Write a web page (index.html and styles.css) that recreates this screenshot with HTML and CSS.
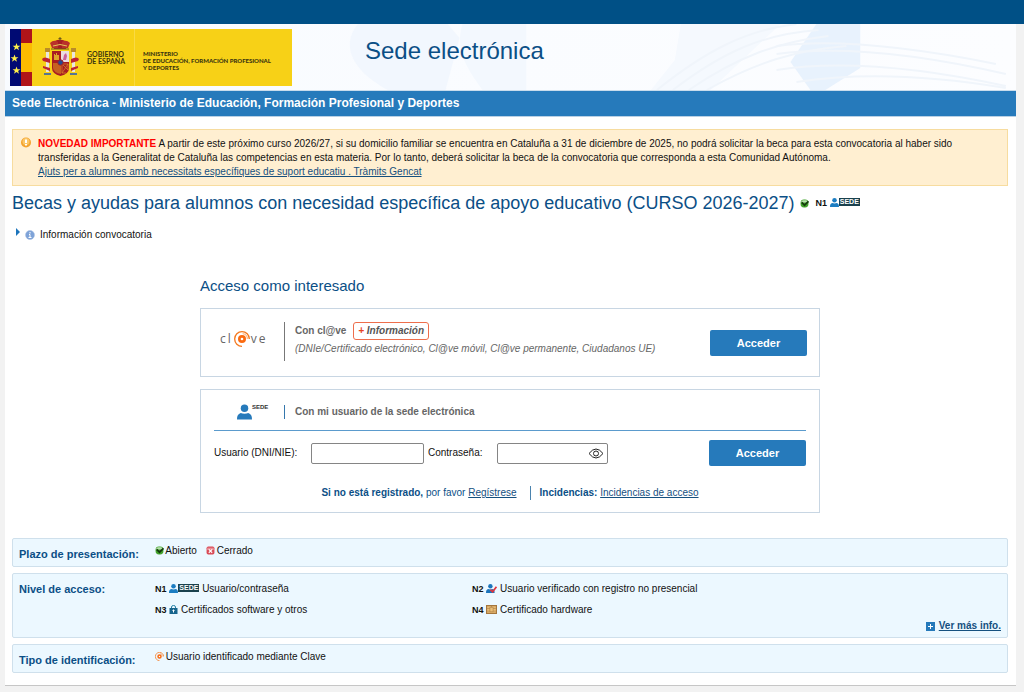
FILE: index.html
```html
<!DOCTYPE html>
<html lang="es">
<head>
  <meta charset="UTF-8">
  <meta name="viewport" content="width=device-width, initial-scale=1.0">
  <title>Sede electrónica</title>
  <link rel="stylesheet" href="styles.css">
</head>
<body>
  <svg class="sprite" aria-hidden="true">
    <symbol id="i-user" viewBox="0 0 16 16">
      <circle cx="8" cy="4" r="4"/>
      <path d="M0 16c0-4 1-6 4-7 2 1 6 1 8 0 3 1 4 3 4 7z"/>
    </symbol>
    <symbol id="i-open" viewBox="0 0 16 16">
      <rect x="1" y="1" width="14" height="14" rx="6" fill="#43a32c"/>
      <path d="M2 6c0-3 2-4 6-4s6 1 6 4z" fill="#b9dfae"/>
      <path d="M3 6l5 5 7-7" fill="none" stroke="#123c0b" stroke-width="3"/>
    </symbol>
    <symbol id="i-closed" viewBox="0 0 16 16">
      <rect x="1" y="1" width="14" height="14" rx="3" fill="#d94b57"/>
      <path d="M2 3h12v4H2z" fill="#ea8c93"/>
      <path d="M5 6l6 6m0-6l-6 6" stroke="#fff" stroke-width="2"/>
    </symbol>
    <symbol id="i-at" viewBox="0 0 24 24">
      <g fill="none" stroke="#f47a20" stroke-width="2">
        <path d="M12 23A11 11 0 1 1 23 12"/>
        <path d="M13 4A8 8 0 0 1 20 12" stroke-width="1"/>
      </g>
      <circle cx="12" cy="12" r="4" fill="#fff" stroke="#fb6a10" stroke-width="4"/>
    </symbol>
  </svg>

  <div class="topbar"></div>
  <div class="page">
    <header class="header">
      <svg class="header-bg" viewBox="0 0 720 66" preserveAspectRatio="none" aria-hidden="true">
        <path d="M60 0h90l12 14-14 52H90C60 50 40 25 60 0z" fill="#f2f7fe"/>
        <path d="M165 0h64v66h-44c-16-22-28-40-20-66z" fill="#f3f8fe"/>
        <path d="M384 0h100l-70 66h-60l24-30z" fill="#f5f9fe"/>
        <path d="M520 0h44v44l-35 22h-15l-20-28z" fill="#e8f2fd"/>
        <g fill="none" stroke="#f0f5fb" stroke-width="2">
          <path d="M360 66c50-40 90-60 140-66M376 66c50-38 90-56 146-60M392 66c50-34 90-48 140-54M410 66c50-28 90-40 140-44"/>
          <path d="M480 22q80-10 220 18M480 30q90-12 230 20M480 46q90-14 230 16M500 58q90-14 210 6"/>
        </g>
      </svg>
      <a class="logo" href="#">
        <svg class="logo-flag" viewBox="0 0 72 57" role="img" aria-label="Escudo de España">
          <path d="M0 0h11v57H0z" fill="#000a73"/>
          <path d="M11 0h11v57H11z" fill="#b01419"/>
          <path d="M11 14h11v29H11z" fill="#fdbb00"/>
          <g fill="#fff04a">
            <path id="star" d="M6.500 14l1 2.700h2.900l-2.300 1.700.9 2.800-2.500-1.700L4 21.200l.9-2.800-2.300-1.700h2.900z"/>
            <use href="#star" x="-2" y="11.500"/>
            <use href="#star" y="23.500"/>
          </g>
          <path d="M43 13q7-5 14 0l-1 7H44z" fill="#a71c24"/>
          <path d="M40 14q4-4 8-1v6h-6zM60 14q-4-4-8-1v6h6z" fill="#b9312a"/>
          <path d="M50 8v4m-1.500-2.500h3M41 20h18" stroke="#6b5b19" stroke-width="1"/>
          <path d="M43 17q7-3 14 0" fill="none" stroke="#e4c85a" stroke-width="1"/>
          <path d="M42 22h17v17q0 6-8.500 8Q42 45 42 39z" fill="#a91c22"/>
          <path d="M51 22h8v11h-8z" fill="#eadce3"/>
          <path d="M53 31l1-5 2-2 1 3-1 4z" fill="#c95f9b"/>
          <path d="M44 31v-6h1v1h1v-2h1v2h2v5z" fill="#dfa52b"/>
          <path d="M43 34h8v11q-7-1-8-6z" fill="#d9a017"/>
          <path d="M44 34v8m2-8v10m2-10v11m2-11v11" stroke="#b3232a" stroke-width="1"/>
          <path d="M52 35h6l-6 9zM58 35v6l-6-6m0 9h4" fill="none" stroke="#d58c25" stroke-width=".7"/>
          <circle cx="50.500" cy="33.500" r="2.700" fill="#234b91" stroke="#a91c22"/>
          <path d="M36 23h3v20h-3zM62 23h3v20h-3z" fill="#eae6dc"/>
          <path d="M35 22h5m-5-2h5m21 2h5m-5-2h5" stroke="#a6752f" stroke-width="1.500"/>
          <path d="M32 30q2-3 8 0v4l-7-2zM69 30q-2-3-8 0v4l7-2zM33 37l7 2v3l-7-3zM68 37l-7 2v3l7-3z" fill="#bd2330"/>
          <path d="M34 44h7v2h-7zM60 44h7v2h-7z" fill="#577592"/>
        </svg>
        <span class="logo-gob">GOBIERNO<br>DE ESPAÑA</span>
        <span class="logo-min">MINISTERIO<br>DE EDUCACIÓN, FORMACIÓN PROFESIONAL<br>Y DEPORTES</span>
      </a>
      <h1>Sede electrónica</h1>
    </header>

    <div class="bluebar">Sede Electrónica - Ministerio de Educación, Formación Profesional y Deportes</div>

    <main class="content">
      <div class="notice">
        <svg class="notice-icon" viewBox="0 0 24 24" aria-hidden="true">
          <circle cx="12" cy="11" r="10" fill="#f3a32d"/>
          <circle cx="12" cy="9" r="7" fill="#fbc667"/>
          <path d="M12 5v7m0 2v3" stroke="#fff" stroke-width="4"/>
        </svg>
        <div>
          <strong>NOVEDAD IMPORTANTE</strong> A partir de este próximo curso 2026/27, si su domicilio familiar se encuentra en Cataluña a 31 de diciembre de 2025, no podrá solicitar la beca para esta convocatoria al haber sido transferidas a la Generalitat de Cataluña las competencias en esta materia. Por lo tanto, deberá solicitar la beca de la convocatoria que corresponda a esta Comunidad Autónoma.<br>
          <a href="#">Ajuts per a alumnes amb necessitats específiques de suport educatiu . Tràmits Gencat</a>
        </div>
      </div>

      <div class="title-row">
        <h2>Becas y ayudas para alumnos con necesidad específica de apoyo educativo (CURSO 2026-2027)</h2>
        <svg class="icon" aria-label="Abierto"><use href="#i-open"/></svg>
        <span class="level"><b>N1</b> <svg class="icon user"><use href="#i-user"/></svg><span class="sede">SEDE</span></span>
      </div>

      <details class="info">
        <summary>
          <svg class="arrow" viewBox="0 0 4 8" aria-hidden="true"><path d="M0 0l4 4-4 4z" fill="#1c75bc"/></svg>
          <svg class="info-icon" viewBox="0 0 20 20" aria-hidden="true">
            <circle cx="10" cy="10" r="9" fill="#7ea3d8" stroke="#a6bfe3"/>
            <path d="M10 4v3M8 9h2v6m-3 0h6" fill="none" stroke="#fff" stroke-width="2"/>
          </svg>
          Información convocatoria
        </summary>
      </details>

      <section class="access">
        <h3>Acceso como interesado</h3>

        <div class="box clave">
          <div class="clave-logo">
            <span>cl</span><svg viewBox="0 0 24 24" aria-label="@"><use href="#i-at"/></svg><span>ve</span>
          </div>
          <div class="clave-text">
            <div class="clave-title">Con cl@ve <a class="more" href="#"><span>+</span> Información</a></div>
            <em>(DNIe/Certificado electrónico, Cl@ve móvil, Cl@ve permanente, Ciudadanos UE)</em>
          </div>
          <button class="btn" type="button">Acceder</button>
        </div>

        <form class="box login">
          <div class="login-head">
            <div class="login-logo"><svg><use href="#i-user"/></svg><span>SEDE</span></div>
            <b>Con mi usuario de la sede electrónica</b>
          </div>
          <div class="login-row">
            <label class="label-user" for="usuario">Usuario (DNI/NIE):</label>
            <input type="text" id="usuario">
            <label class="label-pass" for="clave">Contraseña:</label>
            <span class="pass">
              <input type="password" id="clave">
              <button class="eye" type="button" aria-label="Mostrar contraseña">
                <svg viewBox="0 0 16 12" fill="none" stroke="#222">
                  <path d="M1 6q7-9 14 0-7 9-14 0z"/>
                  <circle cx="8" cy="6" r="2.500"/>
                </svg>
              </button>
            </span>
            <button class="btn" type="submit">Acceder</button>
          </div>
          <div class="login-links">
            <span><b>Si no está registrado,</b> por favor <a href="#">Regístrese</a></span>
            <span><b>Incidencias:</b> <a href="#">Incidencias de acceso</a></span>
          </div>
        </form>
      </section>

      <section class="panel">
        <h4>Plazo de presentación:</h4>
        <div class="states">
          <span class="level"><svg class="icon"><use href="#i-open"/></svg> Abierto</span>
          <span class="level"><svg class="icon"><use href="#i-closed"/></svg> Cerrado</span>
        </div>
      </section>

      <section class="panel panel-levels">
        <h4>Nivel de acceso:</h4>
        <div class="levels">
          <span class="level"><b>N1</b> <svg class="icon user"><use href="#i-user"/></svg><span class="sede">SEDE</span> Usuario/contraseña</span>
          <span class="level"><b>N2</b>
            <svg class="icon wide" viewBox="0 0 20 16"><use href="#i-user" width="16" height="16" fill="#1c75bc"/><path d="M8 10l4 4 7-9" fill="none" stroke="#e0343c" stroke-width="3"/></svg>
            Usuario verificado con registro no presencial</span>
          <span class="level"><b>N3</b>
            <svg class="icon" viewBox="0 0 16 18"><path d="M4 8V4q0-3 4-3t4 3v4" fill="none" stroke="#2581a6" stroke-width="2"/><path d="M0 6h16v12H0z" fill="#17658d"/><path d="M8 9v6m-2-4h4" stroke="#fff" stroke-width="2"/></svg>
            Certificados software y otros</span>
          <span class="level"><b>N4</b>
            <svg class="icon wide" viewBox="0 0 20 16"><path d="M1 1h18v14H1z" fill="#ecbf78" stroke="#a4763d" stroke-width="2"/><path d="M2 6h5m-5 5h5m6-5h5m-5 5h5M7 4v8h6V4zM10 1v3" fill="none" stroke="#a4763d"/></svg>
            Certificado hardware</span>
        </div>
        <a class="see-more" href="#">
          <svg viewBox="0 0 18 18" aria-hidden="true"><path d="M0 0h18v18H0z" fill="#2579ba"/><path d="M9 4v10M4 9h10" stroke="#fff" stroke-width="2"/></svg><span>Ver más info.</span></a>
      </section>

      <section class="panel">
        <h4>Tipo de identificación:</h4>
        <div class="states">
          <span class="level"><svg class="icon"><use href="#i-at"/></svg> Usuario identificado mediante Clave</span>
        </div>
      </section>
    </main>
  </div>
</body>
</html>
```

FILE: styles.css
```css
* {
  box-sizing: border-box;
}
body {
  margin: 0;
  background-color: #f2f2f2;
  font-family: "Liberation Sans", Arial, sans-serif;
  font-size: 10px;
  line-height: 14px;
  color: #111;
}
h1, h2, h3, h4 {
  margin: 0;
  color: #0b4f86;
  font-weight: normal;
}
a {
  color: #15507f;
}
button, input {
  font-family: inherit;
}
.sprite {
  display: none;
}
.topbar {
  height: 24px;
  background-color: #005086;
}
.page {
  margin: 0 8px 0 5px;
  background-color: #fff;
  border-bottom: 1px solid #c6c6c6;
}

/* header */
.header {
  position: relative;
  display: flex;
  align-items: flex-start;
  height: 67px;
  padding: 5px;
  background: linear-gradient(to right, #f8fbff, #fcfdff);
  border-bottom: 1px solid #c9dcec;
}
.header-bg {
  position: absolute;
  top: 0;
  right: 0;
  width: 71%;
  height: 66px;
}
.logo {
  position: relative;
  display: flex;
  align-items: center;
  width: 282px;
  height: 57px;
  background-color: #f7d117;
  color: #3b3510;
  font-family: Lato, sans-serif;
  font-size: 7px;
  line-height: 7px;
  font-weight: bold;
  text-decoration: none;
  white-space: nowrap;
}
.logo-flag {
  width: 72px;
  height: 57px;
}
.logo-gob {
  width: 52px;
  padding-left: 5px;
}
.logo-min {
  display: flex;
  align-items: center;
  height: 57px;
  padding: 6px 0 0 8px;
  border-left: 1px solid #f9da45;
  font-size: 6px;
  font-weight: 900;
}
.header h1 {
  position: relative;
  margin-left: 73px;
  padding-top: 7px;
  font-size: 24px;
  line-height: 30px;
}
.bluebar {
  padding: 0 7px;
  background-color: #267abb;
  border-bottom: 1px solid #b9d0e4;
  color: #fff;
  font-size: 12px;
  line-height: 25px;
  font-weight: bold;
}
.content {
  padding: 12px 8px 12px 7px;
}

/* notice */
.notice {
  display: flex;
  gap: 6px;
  padding: 7px 7px 6px;
  background-color: #ffefd1;
  border: 1px solid #f7dc9f;
}
.notice strong {
  color: #f00;
}
.notice-icon {
  flex: none;
  width: 12px;
  height: 12px;
}

.title-row {
  display: flex;
  align-items: center;
  gap: 6px;
  margin-top: 4px;
}
.title-row h2 {
  font-size: 18px;
  line-height: 26px;
}
.icon {
  width: 9px;
  height: 9px;
  vertical-align: -1px;
}
.icon.wide {
  width: 11px;
}
.icon.user {
  fill: #1c7dc2;
}
.states .icon {
  margin-right: -1px;
}
.level b {
  font-size: 9px;
}
.sede {
  display: inline-block;
  padding: 0 1px;
  background-color: #1a414d;
  color: #fff;
  font-size: 7px;
  line-height: 8px;
  font-weight: bold;
  vertical-align: 2px;
}
.info {
  margin-top: 12px;
}
.info summary {
  display: flex;
  align-items: center;
  gap: 5px;
  padding-left: 4px;
  list-style: none;
}
.arrow {
  width: 4px;
  height: 8px;
  margin-bottom: 6px;
}
.info-icon {
  width: 10px;
  height: 10px;
}

/* access */
.access {
  max-width: 620px;
  margin: 34px auto 25px;
}
.access h3 {
  font-size: 15px;
  line-height: 20px;
}
.box {
  border: 1px solid #c8d6e3;
}
.btn {
  width: 97px;
  height: 26px;
  margin-left: auto;
  padding: 0;
  background-color: #267abb;
  border: none;
  border-radius: 2px;
  color: #fff;
  font-size: 11px;
  font-weight: bold;
  cursor: pointer;
}
.clave {
  display: flex;
  align-items: center;
  height: 69px;
  margin-top: 12px;
  padding: 0 12px 0 19px;
}
.clave-logo {
  display: flex;
  align-items: center;
  gap: 1px;
  width: 64px;
  padding-bottom: 8px;
  color: #666;
  font-family: "Open Sans", sans-serif;
  font-size: 12px;
  letter-spacing: 2px;
}
.clave-logo svg {
  width: 16px;
  height: 16px;
}
.clave-text {
  align-self: flex-start;
  margin-top: 13px;
  padding: 0 0 5px 10px;
  border-left: 1px solid #777;
  color: #666;
}
.clave-title {
  margin-bottom: 2px;
  font-weight: bold;
}
.more {
  display: inline-block;
  margin-left: 4px;
  padding: 1px 4px;
  border: 1px solid #ee6e4c;
  border-radius: 3px;
  color: #555;
  font-style: italic;
  text-decoration: none;
}
.more span {
  color: #e8431f;
}
.login {
  margin-top: 12px;
  padding: 0 13px 12px;
}
.login-head {
  display: flex;
  align-items: center;
  height: 41px;
  padding-top: 3px;
  border-bottom: 1px solid #5b9bcd;
}
.login-head b {
  padding-left: 10px;
  border-left: 1px solid #3577ad;
  color: #666;
}
.login-logo {
  display: flex;
  width: 70px;
  padding-left: 23px;
}
.login-logo svg {
  width: 15px;
  height: 16px;
  fill: #267abb;
}
.login-logo span {
  font-size: 6px;
  line-height: 6px;
  font-weight: bold;
  color: #333;
}
.login-row {
  display: flex;
  align-items: center;
  margin-top: 9px;
}
.label-user {
  width: 97px;
}
.label-pass {
  width: 73px;
  padding-left: 4px;
}
.login-row input {
  width: 113px;
  height: 21px;
  padding: 1px 4px;
  background-color: #fff;
  border: 1px solid #858585;
  border-radius: 2px;
  font-size: 10px;
}
.pass {
  position: relative;
}
.login-row .pass input {
  display: block;
  width: 111px;
  padding-right: 22px;
}
.eye {
  position: absolute;
  top: 3px;
  right: 4px;
  width: 16px;
  height: 15px;
  padding: 0;
  background: none;
  border: none;
}
.eye svg {
  display: block;
  width: 16px;
  height: 15px;
}
.login-links {
  display: flex;
  justify-content: center;
  margin-top: 20px;
  color: #0b4f86;
}
.login-links span + span {
  margin-left: 13px;
  padding-left: 9px;
  border-left: 1px solid #4b83ae;
}

/* bottom panels */
.panel {
  display: grid;
  grid-template-columns: 136px 1fr;
  margin-top: 6px;
  padding: 5px 6px;
  background-color: #ecf8ff;
  border: 1px solid #cfe0ec;
  border-radius: 2px;
}
.panel h4 {
  padding-top: 3px;
  font-size: 11px;
  font-weight: bold;
}
.states {
  display: flex;
  gap: 9px;
}
.panel-levels {
  padding: 5px 6px 4px;
}
.levels {
  display: grid;
  grid-template-columns: 317px 1fr;
  row-gap: 7px;
  padding-top: 3px;
}
.see-more {
  grid-column: 2;
  justify-self: end;
  display: flex;
  align-items: center;
  gap: 4px;
  margin-top: 2px;
  font-weight: bold;
  text-decoration: none;
}
.see-more span {
  text-decoration: underline;
}
.see-more svg {
  width: 9px;
  height: 9px;
}
```
